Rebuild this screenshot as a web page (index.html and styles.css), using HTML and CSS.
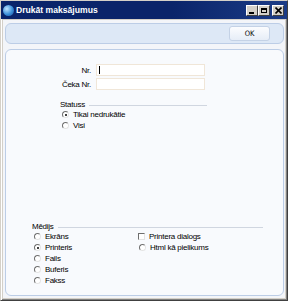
FILE: index.html
```html
<html lang="lv">
  <head>
    <title>Drukāt maksājumus</title>
    <link rel="stylesheet" href="styles.css">
  </head>
  <body>
    <div class="window">
      <div class="titlebar">
        <span class="app-icon"></span>
        <span class="title">Drukāt maksājumus</span>
        <div class="title-buttons">
          <span class="tbtn tbtn-min"></span>
          <span class="tbtn tbtn-max"></span>
          <span class="tbtn tbtn-close">
            <svg width="7" height="7" viewBox="0 0 7 7"><path d="M0.5 0.5 L6.5 6.5 M6.5 0.5 L0.5 6.5" stroke="#000" stroke-width="1.6"/></svg>
          </span>
        </div>
      </div>
      <div class="client">
        <div class="panel toolbar">
          <button type="button" class="btn-ok">OK</button>
        </div>
        <div class="panel main">
          <div class="fields">
            <label class="field-label" for="nr">Nr.</label>
            <div class="input" id="nr"><span class="caret"></span></div>
            <label class="field-label" for="ceka-nr">Čeka Nr.</label>
            <div class="input" id="ceka-nr"></div>
          </div>

          <div class="group group-status">
            <div class="group-head"><span>Statuss</span><span class="rule"></span></div>
            <div class="option"><span class="radio checked"></span>Tikai nedrukātie</div>
            <div class="option"><span class="radio"></span>Visi</div>
          </div>

          <div class="spacer"></div>

          <div class="group group-media">
            <div class="group-head"><span>Mēdijs</span><span class="rule"></span></div>
            <div class="media-cols">
              <div class="media-col">
                <div class="option"><span class="radio"></span>Ekrāns</div>
                <div class="option"><span class="radio checked"></span>Printeris</div>
                <div class="option"><span class="radio"></span>Fails</div>
                <div class="option"><span class="radio"></span>Buferis</div>
                <div class="option"><span class="radio"></span>Fakss</div>
              </div>
              <div class="media-col media-col-right">
                <div class="option"><span class="checkbox"></span>Printera dialogs</div>
                <div class="option"><span class="radio"></span>Html kā pielikums</div>
              </div>
            </div>
          </div>
        </div>
      </div>
    </div>
  </body>
</html>
```

FILE: styles.css
```css
body {
  margin: 0;
  font-family: "Liberation Sans", Arial, sans-serif;
  font-size: 8px;
  letter-spacing: -0.25px;
  color: #000;
}
.window {
  width: 288px;
  height: 301px;
  box-sizing: border-box;
  background: #d4d0c8;
  border: 1px solid #404040;
  border-top-color: #d4d0c8;
  border-left-color: #d4d0c8;
  box-shadow: inset 1px 1px 0 #fff, inset -1px -1px 0 #808080;
  padding: 2px;
  padding-top: 0;
  display: flex;
  flex-direction: column;
}
.titlebar {
  height: 18px;
  margin: 0 -2px;
  padding: 0 3px 0 2px;
  background: linear-gradient(to right, #0a246a, #0a246a 60%, #1c3c86);
  display: flex;
  align-items: center;
  color: #fff;
}
.app-icon {
  width: 11px;
  height: 11px;
  border-radius: 50%;
  background: radial-gradient(circle at 35% 35%, #bfe4ff, #3a8fd8 55%, #1b4f9a);
  margin-right: 2px;
}
.title {
  font-weight: bold;
  font-size: 8.6px;
  letter-spacing: 0;
  flex: 1;
}
.title-buttons {
  display: flex;
  gap: 0;
}
.tbtn {
  width: 12px;
  height: 11px;
  box-sizing: border-box;
  background: #d4d0c8;
  border: 1px solid;
  border-color: #fff #404040 #404040 #fff;
  display: flex;
  align-items: center;
  justify-content: center;
}
.tbtn-close {
  margin-left: 2px;
}
.tbtn-min::after {
  content: "";
  width: 5px;
  height: 2px;
  background: #000;
  margin-top: 5px;
  margin-left: -1px;
}
.tbtn-max::after {
  content: "";
  width: 6px;
  height: 5px;
  box-sizing: border-box;
  border: 1px solid #000;
  border-top-width: 2px;
}
.client {
  flex: 1;
  background: #f3f5f9;
  margin: 1px 0 0;
  padding: 3px 1px 2px 2px;
  display: flex;
  flex-direction: column;
  gap: 5px;
}
.panel {
  border: 1px solid #bccde6;
  border-radius: 6px;
}
.toolbar {
  height: 21px;
  box-sizing: border-box;
  background: #dde8f6;
  display: flex;
  align-items: center;
  justify-content: flex-end;
  padding-right: 13px;
}
.btn-ok {
  width: 41px;
  height: 15px;
  border: 1px solid #c4d2e6;
  border-radius: 3px;
  background: linear-gradient(#fbfcfe, #e6edf7);
  font-family: "DejaVu Sans Condensed", "DejaVu Sans", sans-serif;
  font-size: 7.5px;
  padding: 0;
  color: #000;
}
.main {
  flex: 1;
  background: #f8fafd;
  display: flex;
  flex-direction: column;
  padding: 14px 0 9px;
}
.fields {
  display: grid;
  grid-template-columns: 85px 109px;
  column-gap: 5px;
  row-gap: 2px;
  align-items: center;
}
.field-label {
  text-align: right;
}
.input {
  height: 12px;
  box-sizing: border-box;
  background: #fff;
  border: 1px solid #f0e6d8;
}
.caret {
  display: block;
  width: 1px;
  height: 8px;
  background: #000;
  margin: 1px 0 0 2px;
}
.group-head {
  display: flex;
  align-items: center;
  gap: 4px;
  height: 10px;
}
.rule {
  flex: 1;
  height: 1px;
  background: #d0d6e0;
  margin-top: 2px;
}
.group-status {
  margin: 9px 0 0 54px;
  width: 147px;
}
.option {
  display: flex;
  align-items: center;
  height: 11px;
}
.radio {
  width: 7px;
  height: 7px;
  box-sizing: border-box;
  border-radius: 50%;
  border: 1px solid;
  border-color: #6e6e6e #e4e4e4 #e4e4e4 #6e6e6e;
  background: #fff;
  margin: 0 4px 0 2px;
  display: flex;
  align-items: center;
  justify-content: center;
}
.radio.checked::after {
  content: "";
  width: 2px;
  height: 2px;
  background: #000;
  border-radius: 50%;
}
.checkbox {
  width: 7px;
  height: 7px;
  box-sizing: border-box;
  border: 1px solid;
  border-color: #6e6e6e #e4e4e4 #e4e4e4 #6e6e6e;
  background: #fff;
  margin: 0 4px 0 1px;
}
.spacer {
  flex: 1;
}
.group-media {
  margin: 0 0 0 26px;
  width: 231px;
}
.media-cols {
  display: flex;
}
.media-col {
  width: 105px;
}
```
